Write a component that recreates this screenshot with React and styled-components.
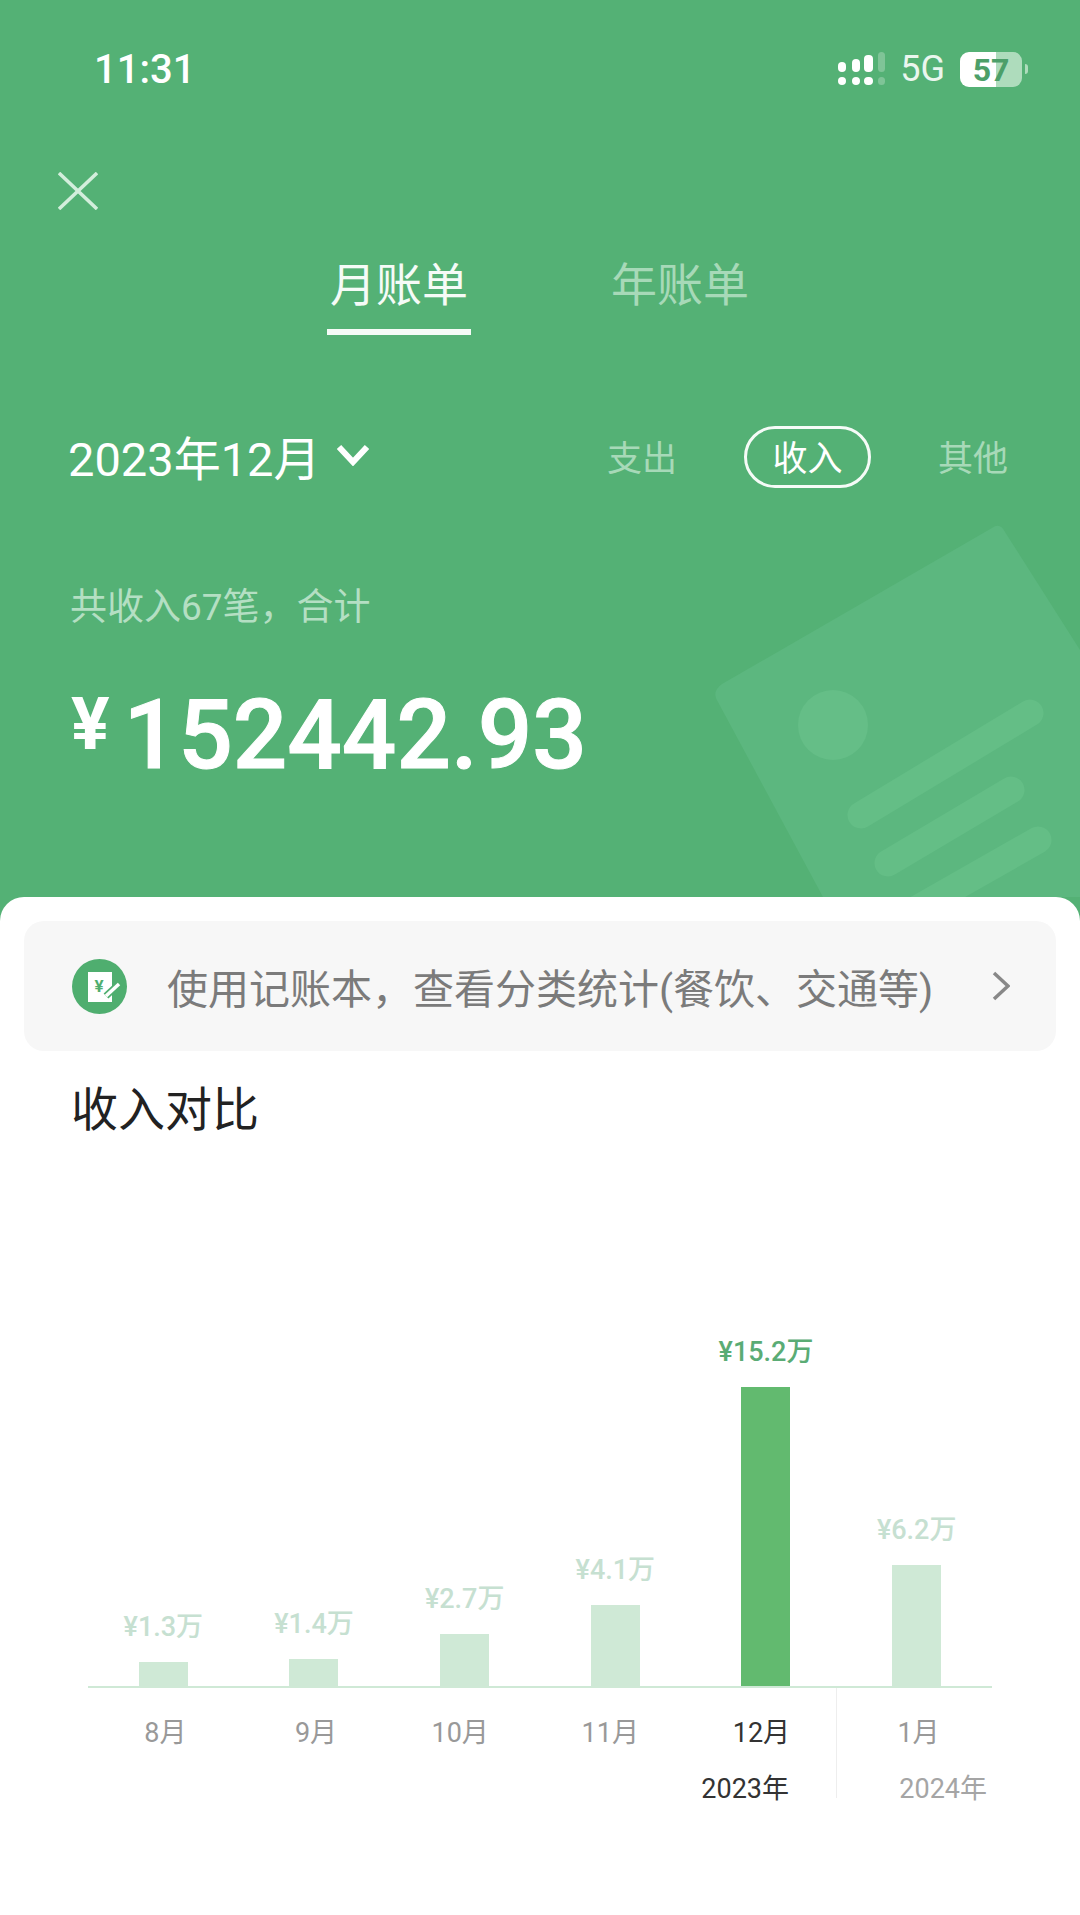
import React from 'react'
import styled, { createGlobalStyle } from 'styled-components'

const GlobalStyle = createGlobalStyle`
    * { box-sizing: border-box; }
    html, body { margin: 0; padding: 0; background: #fff; }
    body { font-family: Roboto, "Noto Sans CJK SC", sans-serif; }
`
const Page = styled.div`
    display: flex;
    flex-direction: column;
    width: 1080px;
    height: 1915px;
    background: #54b175;
    overflow: hidden;
`
const Header = styled.header`
    position: relative;
    height: 897px;
    flex: none;
    overflow: hidden;
`
const Decoration = styled.svg`
    position: absolute;
    left: 0;
    top: 0;
`
const StatusBar = styled.div`
    position: relative;
    display: flex;
    justify-content: space-between;
    align-items: center;
    height: 40px;
    margin-top: 49px;
    padding: 0 52px 0 94px;
`
const Clock = styled.span`
    color: #fff;
    font-size: 40px;
    font-weight: 500;
`
const StatusIcons = styled.div`
    display: flex;
    align-items: center;
`
const NetworkLabel = styled.span`
    margin: 0 15px 0 14px;
    color: #eaf6ee;
    font-size: 36px;
`
const Battery = styled.div`
    width: 62px;
    height: 35px;
    border-radius: 9px;
    background: linear-gradient(90deg, #fff 0 36px, #aedcbc 36px 100%);
    color: #4c9f69;
    font-size: 32px;
    font-weight: 700;
    line-height: 36px;
    text-align: center;
`
const BatteryNib = styled.div`
    width: 3px;
    height: 10px;
    margin-left: 3px;
    border-radius: 0 3px 3px 0;
    background: #aedcbc;
`
const CloseButton = styled.svg`
    position: relative;
    display: block;
    margin: 83px 0 0 58px;
`
const Tabs = styled.nav`
    position: relative;
    display: flex;
    gap: 137px;
    margin-top: 52px;
    padding-left: 327px;
`
const Tab = styled.div`
    width: 144px;
    padding-bottom: 21px;
    border-bottom: 6px solid ${p => (p.$active ? '#f5fbf7' : 'transparent')};
    color: ${p => (p.$active ? '#f5fbf7' : '#a7d9b8')};
    font-size: 46px;
    line-height: 46px;
    text-align: center;
`
const FilterRow = styled.div`
    position: relative;
    display: flex;
    justify-content: space-between;
    align-items: center;
    height: 62px;
    margin-top: 91px;
    padding: 0 72px 0 68px;
`
const MonthPicker = styled.div`
    display: flex;
    align-items: center;
    gap: 16px;
    padding-bottom: 4px;
    color: #fff;
    font-size: 47px;
`
const Segments = styled.div`
    display: flex;
    align-items: center;
    gap: 67px;
`
const Segment = styled.span`
    display: flex;
    justify-content: center;
    align-items: center;
    height: 62px;
    width: ${p => (p.$active ? '127px' : 'auto')};
    padding-bottom: 3px;
    border: ${p => (p.$active ? '3px solid #f5fbf7' : '0')};
    border-radius: 31px;
    color: ${p => (p.$active ? '#fff' : '#a7d9b8')};
    font-size: 35px;
`
const SummaryLabel = styled.div`
    position: relative;
    margin-top: 100px;
    padding-left: 70px;
    color: #b4dfc3;
    font-size: 37px;
    line-height: 40px;
`
const Amount = styled.div`
    position: relative;
    display: flex;
    align-items: flex-start;
    gap: 14px;
    margin-top: 47px;
    padding-left: 71px;
    color: #fff;
`
const Currency = styled.span`
    font-size: 72px;
    font-weight: 700;
    line-height: 100px;
`
const AmountValue = styled.span`
    font-size: 96px;
    font-weight: 500;
    line-height: 120px;
    -webkit-text-stroke: 1px #fff;
`
const Sheet = styled.main`
    flex: 1;
    padding-top: 24px;
    border-radius: 24px 24px 0 0;
    background: #fff;
`
const Banner = styled.div`
    display: flex;
    align-items: center;
    height: 130px;
    margin: 0 24px;
    padding: 0 46px 0 48px;
    border-radius: 20px;
    background: #f7f7f7;
`
const BannerText = styled.span`
    flex: 1;
    margin-left: 40px;
    color: #7b7b7b;
    font-size: 41px;
    white-space: nowrap;
`
const Title = styled.h2`
    margin: 31px 0 0 71px;
    color: #222;
    font-size: 47px;
    font-weight: 400;
    line-height: 56px;
`
const Chart = styled.div`
    display: grid;
    grid-template-columns: repeat(6, 1fr);
    align-items: end;
    height: 550px;
    margin: 0 88px;
    border-bottom: 2px solid #cfe9d6;
`
const Column = styled.div`
    display: flex;
    flex-direction: column;
    align-items: center;
`
const Value = styled.span`
    margin-bottom: 18px;
    color: ${p => (p.$active ? '#5aac75' : '#c6e0d1')};
    font-size: 27px;
    font-weight: 500;
    line-height: 34px;
    white-space: nowrap;
`
const Bar = styled.div`
    width: 49px;
    height: ${p => p.$height}px;
    background: ${p => (p.$active ? '#62ba6f' : '#cfe9d6')};
`
const Axis = styled.div`
    display: flex;
    margin-left: 88px;
`
const AxisPanel = styled.div`
    display: flex;
    flex-direction: column;
    width: ${p => p.$width}px;
    height: 110px;
    padding-top: 29px;
    border-left: ${p => (p.$divided ? '1px solid #eeeeee' : '0')};
`
const Months = styled.div`
    display: grid;
    grid-template-columns: repeat(${p => p.$count}, ${p => p.$size}px);
`
const Month = styled.span`
    justify-self: center;
    margin-left: ${p => p.$shift}px;
    color: ${p => (p.$active ? '#333' : '#999')};
    font-size: 27px;
    line-height: 32px;
`
const Year = styled.span`
    align-self: flex-end;
    margin: 24px ${p => p.$right}px 0 0;
    color: ${p => (p.$active ? '#333' : '#a5a5a5')};
    font-size: 27px;
    line-height: 32px;
`

const BARS = [
    { value: '¥1.3万', height: 24 },
    { value: '¥1.4万', height: 27 },
    { value: '¥2.7万', height: 52 },
    { value: '¥4.1万', height: 81 },
    { value: '¥15.2万', height: 299, active: true },
    { value: '¥6.2万', height: 121 }
]
const MONTHS_2023 = [
    { label: '8月', shift: 4 },
    { label: '9月', shift: 4 },
    { label: '10月', shift: -9 },
    { label: '11月', shift: -10 },
    { label: '12月', shift: -9, active: true }
]

const SignalIcon = () => (
    <svg width="48" height="34" viewBox="0 0 48 34" fill="#fff">
        <rect x="0" y="10" width="8" height="10" rx="4" />
        <rect x="14" y="7" width="8" height="13" rx="4" />
        <rect x="26" y="3" width="9" height="17" rx="4" />
        <rect x="40" y="0" width="7" height="20" rx="3.5" opacity=".25" />
        <rect x="0" y="25" width="8" height="8" rx="4" />
        <rect x="14" y="25" width="8" height="8" rx="4" />
        <rect x="26" y="25" width="9" height="8" rx="4" />
        <rect x="40" y="25" width="7" height="8" rx="3.5" opacity=".25" />
    </svg>
)

const LedgerIcon = () => (
    <svg width="55" height="55" viewBox="0 0 55 55">
        <circle cx="27.5" cy="27.5" r="27.5" fill="#4fae6f" />
        <rect x="16" y="13" width="24" height="30" fill="#fff" />
        <text x="27" y="33" fontSize="17" fontWeight="700" fill="#4fae6f" textAnchor="middle" fontFamily="Roboto, sans-serif">¥</text>
        <path d="M34 37 L48 24" stroke="#4fae6f" strokeWidth="7" />
        <path d="M34 37 L47 25" stroke="#fff" strokeWidth="3.5" />
    </svg>
)

const App = () => (
    <Page>
        <GlobalStyle />
        <Header>
            <Decoration width="1080" height="897" viewBox="0 0 1080 897">
                <path d="M992 528 Q1000 522 1005 532 L1080 650 L1130 730 L1130 897 L823 897 L718 702 Q711 692 722 684 Z" fill="#5cb77f" />
                <circle cx="833" cy="725" r="35" fill="#65be87" />
                <g stroke="#64be86" strokeWidth="27" strokeLinecap="round">
                    <path d="M1030 713 L861 815" />
                    <path d="M1011 790 L888 863" />
                    <path d="M1038 840 L915 910" />
                </g>
            </Decoration>
            <StatusBar>
                <Clock>11:31</Clock>
                <StatusIcons>
                    <SignalIcon />
                    <NetworkLabel>5G</NetworkLabel>
                    <Battery>57</Battery>
                    <BatteryNib />
                </StatusIcons>
            </StatusBar>
            <CloseButton width="40" height="38" viewBox="0 0 40 38" stroke="#d3eedc" strokeWidth="3.5" fill="none">
                <path d="M1 1 L39 37 M39 1 L1 37" />
            </CloseButton>
            <Tabs>
                <Tab $active>月账单</Tab>
                <Tab>年账单</Tab>
            </Tabs>
            <FilterRow>
                <MonthPicker>
                    2023年12月
                    <svg width="32" height="22" viewBox="0 0 32 22" fill="none" stroke="#fff" strokeWidth="6">
                        <path d="M2 3 L16 18 L30 3" />
                    </svg>
                </MonthPicker>
                <Segments>
                    <Segment>支出</Segment>
                    <Segment $active>收入</Segment>
                    <Segment>其他</Segment>
                </Segments>
            </FilterRow>
            <SummaryLabel>{'共收入67笔\uFF0C合计'}</SummaryLabel>
            <Amount>
                <Currency>¥</Currency>
                <AmountValue>152442.93</AmountValue>
            </Amount>
        </Header>
        <Sheet>
            <Banner>
                <LedgerIcon />
                <BannerText>{'使用记账本\uFF0C查看分类统计(餐饮、交通等)'}</BannerText>
                <svg width="18" height="30" viewBox="0 0 18 30" fill="none" stroke="#888" strokeWidth="3.5">
                    <path d="M2 2 L16 15 L2 28" />
                </svg>
            </Banner>
            <Title>收入对比</Title>
            <Chart>
                {BARS.map(bar => (
                    <Column key={bar.value}>
                        <Value $active={bar.active}>{bar.value}</Value>
                        <Bar $height={bar.height} $active={bar.active} />
                    </Column>
                ))}
            </Chart>
            <Axis>
                <AxisPanel $width={748}>
                    <Months $count={5} $size={150.67}>
                        {MONTHS_2023.map(month => (
                            <Month key={month.label} $shift={month.shift} $active={month.active}>{month.label}</Month>
                        ))}
                    </Months>
                    <Year $right={47} $active>2023年</Year>
                </AxisPanel>
                <AxisPanel $width={156} $divided>
                    <Months $count={1} $size={155}>
                        <Month $shift={8}>1月</Month>
                    </Months>
                    <Year $right={5}>2024年</Year>
                </AxisPanel>
            </Axis>
        </Sheet>
    </Page>
)

export default App
